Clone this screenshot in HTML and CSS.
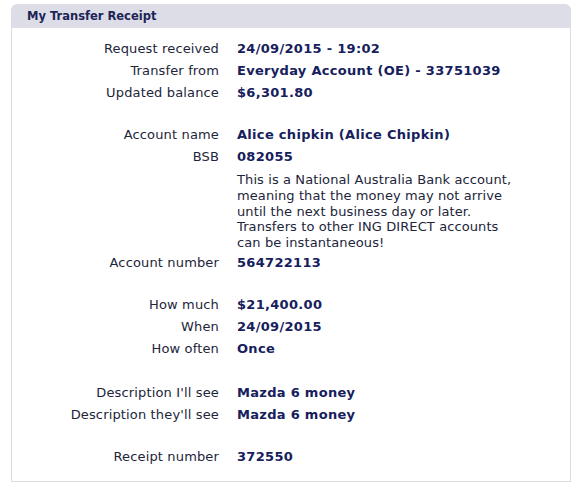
FILE: index.html
```html
<!DOCTYPE html>
<html>
<head>
<meta charset="utf-8">
<link rel="stylesheet" href="styles.css">
</head>
<body>
<div class="panel">
  <div class="panel-head">My Transfer Receipt</div>
  <div class="panel-body">
    <div class="group">
      <div class="label">Request received</div><div class="value">24/09/2015 - 19:02</div>
      <div class="label">Transfer from</div><div class="value">Everyday Account (OE) - 33751039</div>
      <div class="label">Updated balance</div><div class="value">$6,301.80</div>
    </div>
    <div class="group gap20">
      <div class="label">Account name</div><div class="value">Alice chipkin (Alice Chipkin)</div>
      <div class="label">BSB</div><div class="value">082055</div>
      <div class="label"></div><div class="note">This is a National Australia Bank account, meaning that the money may not arrive until the next business day or later. Transfers to other ING DIRECT accounts can be instantaneous!</div>
      <div class="label">Account number</div><div class="value">564722113</div>
    </div>
    <div class="group gap20">
      <div class="label">How much</div><div class="value">$21,400.00</div>
      <div class="label">When</div><div class="value">24/09/2015</div>
      <div class="label">How often</div><div class="value">Once</div>
    </div>
    <div class="group gap22">
      <div class="label">Description I'll see</div><div class="value">Mazda 6 money</div>
      <div class="label">Description they'll see</div><div class="value">Mazda 6 money</div>
    </div>
    <div class="group gap20">
      <div class="label">Receipt number</div><div class="value">372550</div>
    </div>
  </div>
</div>
</body>
</html>
```
FILE: styles.css
```css
html, body {
  margin: 0;
  padding: 0;
  background: #ffffff;
}
body {
  padding: 4px 9px 0 11px;
  font-family: "DejaVu Sans", Verdana, sans-serif;
  font-size: 13px;
}
.panel {
  width: 560px;
  box-sizing: border-box;
}
.panel-head {
  height: 24px;
  line-height: 25px;
  background: #dcdde6;
  border-radius: 6px 6px 0 0;
  padding-left: 16px;
  font-weight: bold;
  font-size: 11.5px;
  color: #1c2456;
}
.panel-body {
  border: 1px solid #dcdcdc;
  border-top: none;
  padding: 10px 0 13px 0;
}
.group {
  display: grid;
  grid-template-columns: 207px 1fr;
  column-gap: 18px;
  grid-auto-rows: auto;
}
.gap20 { margin-top: 20px; }
.gap22 { margin-top: 22px; }
.label {
  text-align: right;
  line-height: 22px;
  color: #22253a;
  letter-spacing: 0.15px;
}
.value {
  line-height: 22px;
  font-weight: bold;
  color: #15205c;
  letter-spacing: 0.3px;
}
.note {
  width: 280px;
  line-height: 15.75px;
  padding: 4px 0 1px 0;
  color: #22253a;
  letter-spacing: 0.1px;
}
```
